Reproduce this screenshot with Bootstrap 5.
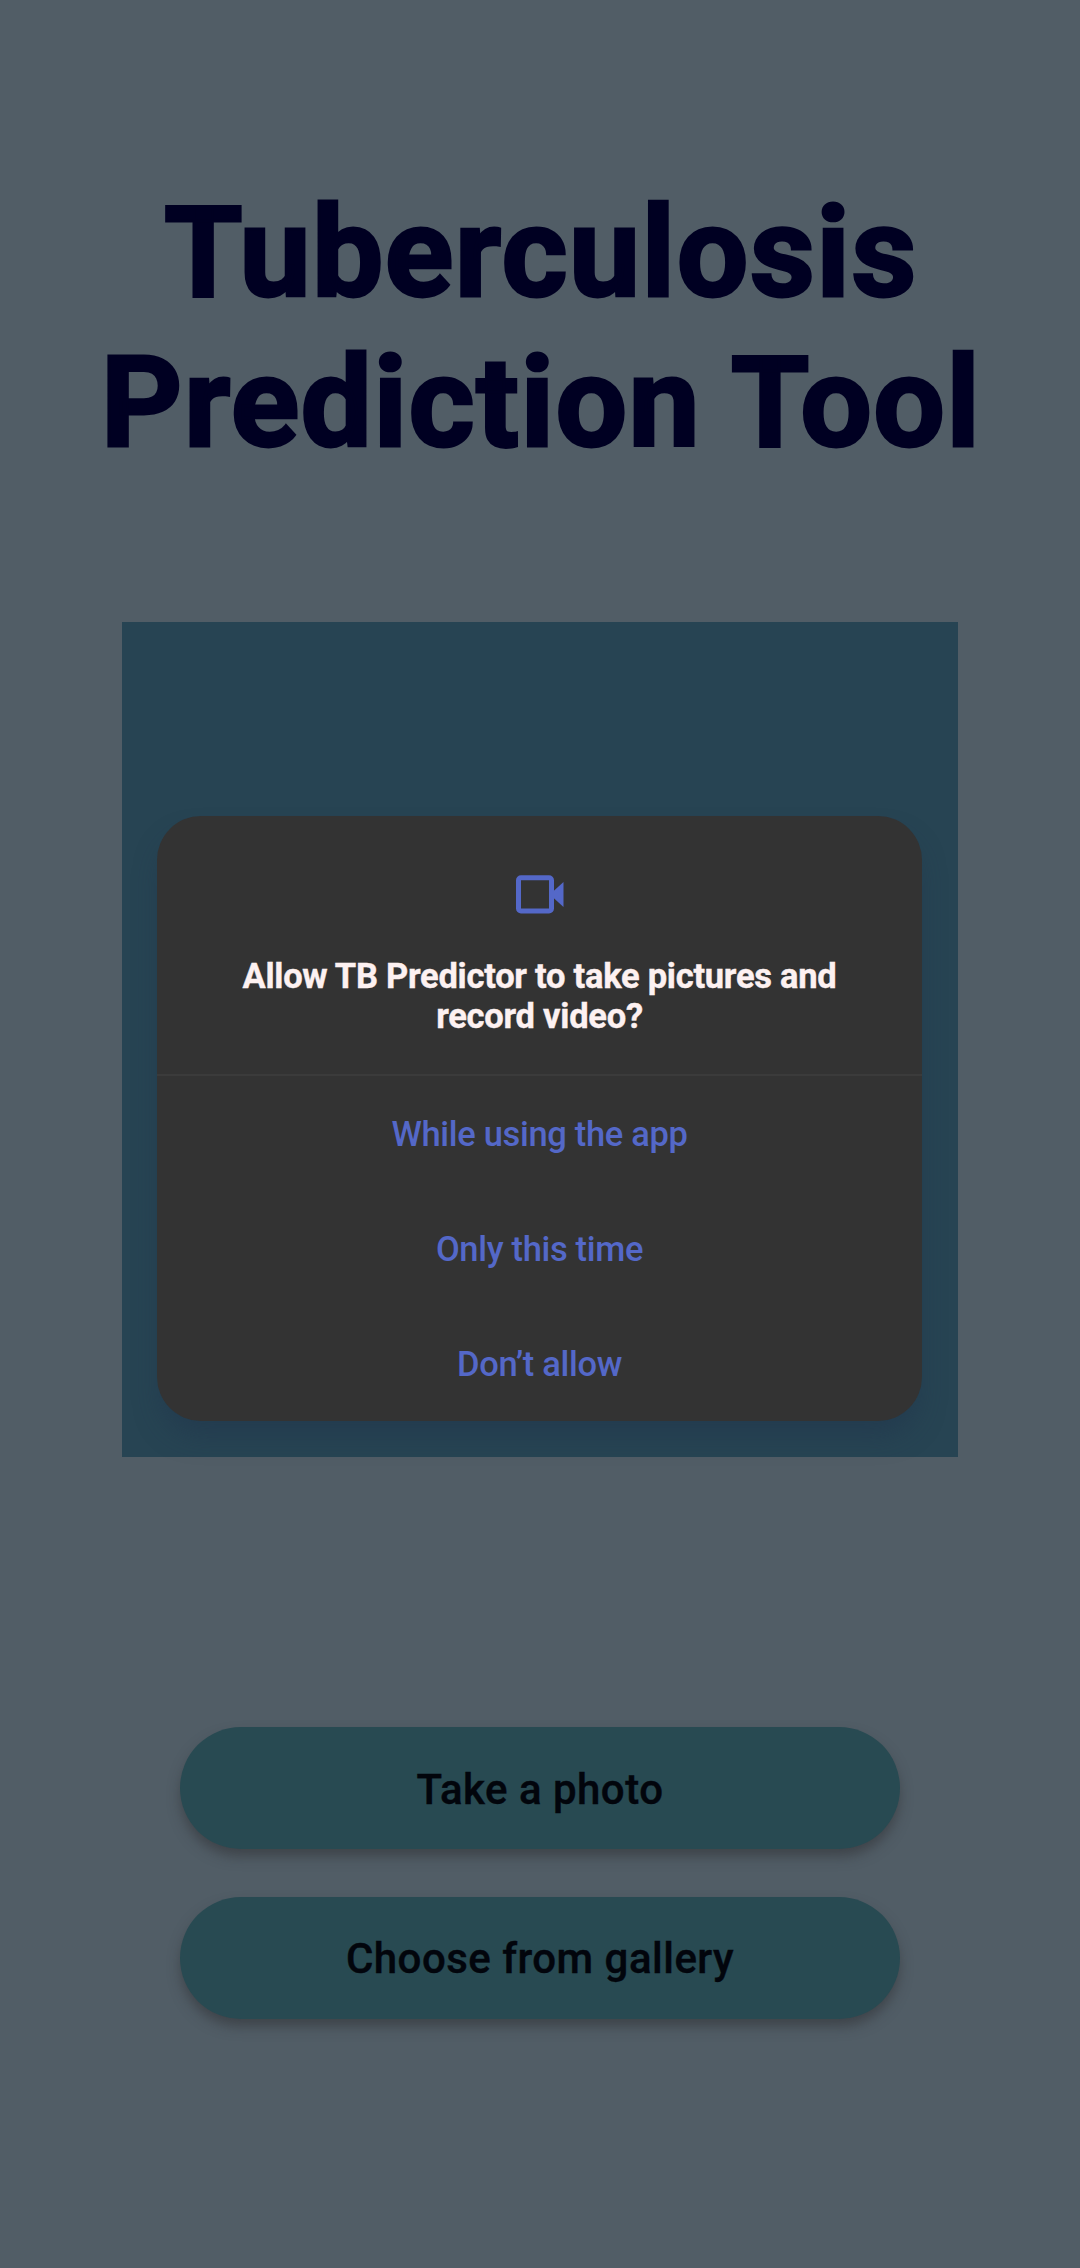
<!DOCTYPE html>
<html lang="en">
<head>
<meta charset="utf-8">
<meta name="viewport" content="width=device-width, initial-scale=1">
<title>TB Predictor</title>
<link rel="stylesheet" href="https://cdn.jsdelivr.net/npm/bootstrap@5.3.0/dist/css/bootstrap.min.css">
<style>
body { background: #515d66; font-family: Roboto, "Liberation Sans", sans-serif; }
.screen { height: 2268px; padding-top: 178px; }
.app-title { font-size: 127px; line-height: 150px; font-weight: 700; letter-spacing: 1.4px; padding-left: 2px; -webkit-text-stroke: 2.8px #000022; color: #000022; margin-bottom: 144px; }
.preview { width: 836px; height: 835px; margin-bottom: 270px; background: #274453; }
.actions { width: 720px; gap: 48px; }
.btn-pill { --bs-btn-color: #02050c; --bs-btn-bg: #284a52; --bs-btn-border-width: 0; height: 122px; font-size: 42px; font-weight: 500; letter-spacing: .48px; -webkit-text-stroke: .4px #02050c; line-height: 50px; padding: 3px 0 0; box-shadow: 0 8px 13px -1px rgba(45, 45, 50, .55); }
.btn-pill + .btn-pill { padding-top: 1px; }
.sheet { left: 157px; top: 816px; width: 765px; height: 605px; border-radius: 44px; background: #333; box-shadow: 0 18px 26px -4px rgba(32, 52, 75, .5); }
.sheet-head { height: 260px; padding-top: 48px; border-bottom: 2px solid #3b3b3b; }
.sheet-title { font-size: 34.5px; line-height: 40px; font-weight: 700; letter-spacing: -.26px; -webkit-text-stroke: .4px #fdf1f1; color: #fdf1f1; margin-top: 32px; }
.choice { height: 115px; font-size: 34.5px; font-weight: 500; letter-spacing: -.33px; color: #5468c8; border: 0; padding: 3px 0 0; }
</style>
<script src="https://cdn.jsdelivr.net/npm/bootstrap@5.3.0/dist/js/bootstrap.bundle.min.js"></script>
</head>
<body>
<main class="screen position-relative d-flex flex-column align-items-center overflow-hidden">
  <h1 class="app-title text-center">Tuberculosis<br>Prediction Tool</h1>
  <div class="preview"></div>
  <div class="actions d-flex flex-column">
    <button type="button" class="btn btn-pill rounded-pill">Take a photo</button>
    <button type="button" class="btn btn-pill rounded-pill">Choose from gallery</button>
  </div>

  <section class="sheet position-absolute d-flex flex-column" role="dialog" aria-labelledby="ask">
    <div class="sheet-head d-flex flex-column align-items-center">
      <svg width="60" height="60" viewBox="0 0 60 60" aria-hidden="true">
        <rect x="8.5" y="13.7" width="33" height="33.2" rx="2.5" fill="none" stroke="#5468c8" stroke-width="5"/>
        <path d="M42.5 28 53.5 18V43L42.5 33Z" fill="#5468c8"/>
      </svg>
      <h2 class="sheet-title text-center mb-0" id="ask">Allow TB Predictor to take pictures and<br>record video?</h2>
    </div>
    <div class="d-flex flex-column">
      <button type="button" class="btn choice">While using the app</button>
      <button type="button" class="btn choice">Only this time</button>
      <button type="button" class="btn choice">Don’t allow</button>
    </div>
  </section>
</main>
</body>
</html>
